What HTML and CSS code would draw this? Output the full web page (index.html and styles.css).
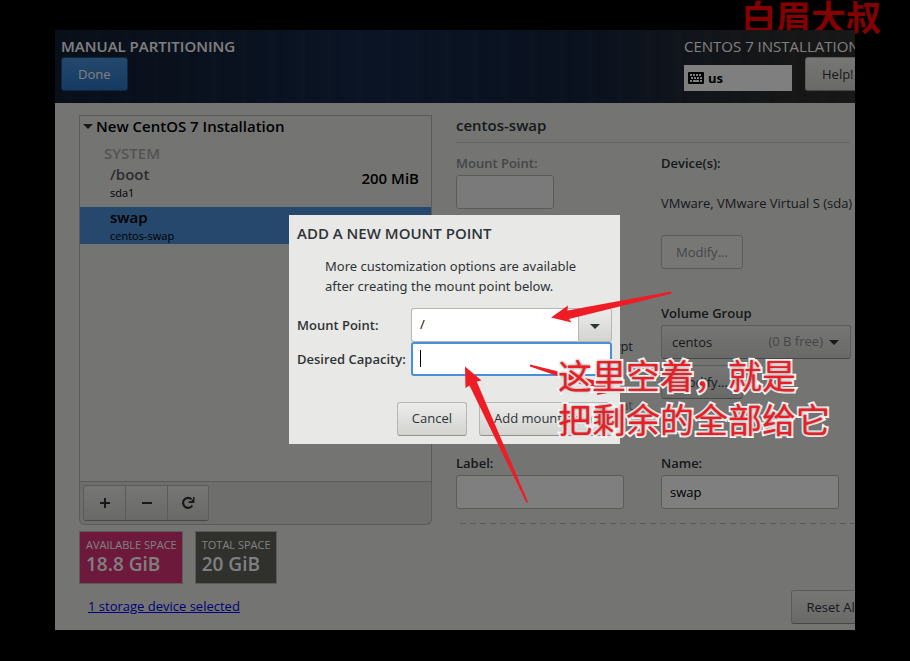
FILE: index.html
```html
<!DOCTYPE html>
<html lang="en">
<head>
  <meta charset="UTF-8">
  <title>Manual Partitioning</title>
  <link rel="stylesheet" href="styles.css">
</head>
<body>
  <div class="watermark" lang="zh-CN">白眉大叔</div>

  <div class="screen">
    <header class="header">
      <div class="header-left">
        <h1 class="header-title">MANUAL PARTITIONING</h1>
        <button class="btn btn-done" type="button">Done</button>
      </div>
      <div class="header-right">
        <div class="product">CENTOS 7 INSTALLATION</div>
        <div class="header-tools">
          <div class="keyboard">
            <svg width="16" height="12" viewBox="0 0 16 12" aria-hidden="true">
              <rect width="16" height="12" rx="1" fill="#000"/>
              <path d="M2 3h2M5 3h2M8 3h2M11 3h2M3 6h2M6 6h2M9 6h2M12 6h2M2 9h2M5 9h6M12 9h2" stroke="#fff" stroke-width="2" fill="none"/>
            </svg>
            <span>us</span>
          </div>
          <button class="btn btn-help" type="button">Help!</button>
        </div>
      </div>
    </header>

    <main class="content">
      <section class="left">
        <div class="tree">
          <div class="tree-head"><span class="caret"></span>New CentOS 7 Installation</div>
          <div class="tree-group">SYSTEM</div>
          <div class="tree-row">
            <div>
              <div class="mount">/boot</div>
              <div class="device">sda1</div>
            </div>
            <div class="size">200 MiB</div>
          </div>
          <div class="tree-row selected">
            <div>
              <div class="mount">swap</div>
              <div class="device">centos-swap</div>
            </div>
          </div>
        </div>
        <div class="toolbar">
          <div class="tool-group">
            <button class="tool" type="button" aria-label="Add">
              <svg width="16" height="16" viewBox="0 0 16 16"><path d="M8 3v10M3 8h10" stroke="#2e3436" stroke-width="2"/></svg>
            </button>
            <button class="tool" type="button" aria-label="Remove">
              <svg width="16" height="16" viewBox="0 0 16 16"><path d="M3 8h10" stroke="#2e3436" stroke-width="2"/></svg>
            </button>
            <button class="tool" type="button" aria-label="Reload">
              <svg width="16" height="16" viewBox="0 0 16 16">
                <path d="M11.500 4.200A5 5 0 1 0 12.300 10.500" stroke="#2e3436" stroke-width="2.200" fill="none"/>
                <path d="M14.500 2v6H8.500V6.300h2.500L13 4V2z" fill="#2e3436"/>
              </svg>
            </button>
          </div>
        </div>
        <div class="stats">
          <div class="stat stat-available">
            <div class="stat-name">AVAILABLE SPACE</div>
            <div class="stat-value">18.8 GiB</div>
          </div>
          <div class="stat stat-total">
            <div class="stat-name">TOTAL SPACE</div>
            <div class="stat-value">20 GiB</div>
          </div>
        </div>
        <a class="storage-link" href="#">1 storage device selected</a>
      </section>

      <section class="right">
        <h2 class="right-title">centos-swap</h2>
        <div class="fields">
          <div class="cell">
            <label class="label disabled" for="mount">Mount Point:</label>
            <input class="input input-short" id="mount" type="text" disabled>
          </div>
          <div class="cell">
            <div class="label">Device(s):</div>
            <div class="devices">VMware, VMware Virtual S (sda)</div>
            <button class="btn btn-modify" type="button" disabled>Modify...</button>
          </div>
          <div class="cell cell-checks">
            <label class="check"><input type="checkbox">Encrypt</label>
            <label class="check disabled"><input type="checkbox" checked disabled>Reformat</label>
          </div>
          <div class="cell">
            <label class="label" for="vg">Volume Group</label>
            <div class="vg">
              <select class="select" id="vg"><option>centos</option></select>
              <span class="vg-free">(0 B free)</span>
              <span class="caret vg-caret"></span>
            </div>
            <button class="btn btn-modify btn-next" type="button">Modify...</button>
          </div>
          <div class="cell">
            <label class="label" for="label">Label:</label>
            <input class="input input-label" id="label" type="text">
          </div>
          <div class="cell">
            <label class="label" for="name">Name:</label>
            <input class="input input-name" id="name" type="text" value="swap">
          </div>
        </div>
        <div class="dashes"></div>
        <button class="btn btn-reset" type="button">Reset All</button>
      </section>
    </main>

    <div class="overlay">
      <form class="dialog">
        <h2 class="dialog-title">ADD A NEW MOUNT POINT</h2>
        <p class="dialog-text">More customization options are available<br>after creating the mount point below.</p>
        <div class="dialog-form">
          <label class="dialog-label" for="new-mount">Mount Point:</label>
          <div class="combo">
            <input class="input" id="new-mount" type="text" value="/">
            <button class="combo-btn" type="button" aria-label="Show mount points"><span class="caret"></span></button>
          </div>
          <label class="dialog-label" for="capacity">Desired Capacity:</label>
          <div class="capacity">
            <input class="input input-focus" id="capacity" type="text">
            <span class="cursor"></span>
          </div>
        </div>
        <div class="dialog-buttons">
          <button class="btn" type="button">Cancel</button>
          <button class="btn" type="button">Add mount point</button>
        </div>
      </form>
    </div>
  </div>

  <!-- arrows and note drawn over the screen -->
  <svg class="arrows" width="910" height="661" viewBox="0 0 910 661" fill="#ee1c25" aria-hidden="true">
    <path d="M551 317.500L568 305.500L567.500 310.500L671 291.500L672 293.500L569 319L571.500 322.500Z"/>
    <path d="M465 366.500L481.500 380.500L476.700 381.500L528 502L526.500 503L469.500 385.500L465.500 388Z"/>
    <path d="M530 364.500L530 366.500L598 390L597 395L618 391L603 377L601 382Z"/>
  </svg>
  <div class="note" lang="zh-CN">这里空着，就是<br>把剩余的全部给它</div>
</body>
</html>
```
FILE: styles.css
```css
* {
  margin: 0;
  padding: 0;
  box-sizing: border-box;
}

body {
  display: flex;
  min-height: 100vh;
  padding: 30px 55px 31px;
  background-color: #000;
  color: #2e3436;
  font-family: 'Open Sans', 'Noto Sans CJK SC', sans-serif;
  font-size: 13px;
  line-height: 20px;
  position: relative;
}

button,
input,
select {
  font: inherit;
  color: inherit;
}

.watermark {
  position: absolute;
  top: 0;
  right: 29px;
  color: #850000;
  font-family: 'Noto Sans CJK SC', sans-serif;
  font-size: 35px;
  font-weight: 700;
  line-height: 32px;
}

.screen {
  position: relative;
  flex: 1;
  min-width: 0;
  display: flex;
  flex-direction: column;
  overflow: hidden;
  background-color: #e8e8e7;
}

/* header */
.header {
  display: grid;
  grid-template-columns: 1fr 171px;
  padding: 6px 0 12px 6px;
  background:
    repeating-linear-gradient(90deg, rgba(255, 255, 255, 0) 0 9px, rgba(255, 255, 255, 0.01) 13px 15px, rgba(0, 0, 0, 0.05) 21px, rgba(255, 255, 255, 0) 29px),
    linear-gradient(90deg, #131f33, #15294a 40%, #14243f 65%, #2e2e2e 92%);
  color: #fff;
  font-size: 15px;
  white-space: nowrap;
}

.header-title {
  margin-bottom: 1px;
  font-size: 15px;
  font-weight: 600;
}

.header-tools {
  display: flex;
  align-items: flex-end;
  gap: 13px;
  margin-top: 1px;
}

.keyboard {
  flex: 0 0 108px;
  height: 26px;
  display: flex;
  align-items: center;
  gap: 4px;
  padding-left: 4px;
  background-color: #fff;
  color: #000;
  font-size: 13px;
  font-weight: bold;
}

/* buttons and inputs */
.btn {
  height: 34px;
  padding: 0 14px 1px;
  border: 1px solid #b6b6b3;
  border-bottom-color: #91918c;
  border-radius: 3px;
  background: linear-gradient(#ececeb, #d3d3d0);
  color: #2e3436;
  font-size: 13px;
  white-space: nowrap;
}

.btn:disabled {
  border-color: #b6b6b3;
  background: #eeeeed;
  color: #8b8e8f;
}

.btn-done,
.btn-help {
  padding: 0 16px 1px;
}

.btn-done {
  border-color: #1c5187;
  background: linear-gradient(#4a90d9, #2a76c6);
  color: #fff;
}

.btn-help {
  flex-shrink: 0;
}

.input,
.select {
  display: block;
  height: 34px;
  width: 100%;
  padding: 0 8px 1px;
  border: 1px solid #b6b6b3;
  border-radius: 3px;
  background-color: #fff;
  color: #000;
  outline: none;
}

.input:disabled {
  background-color: #f4f4f4;
}

.select {
  appearance: none;
  padding: 0 10px 1px;
  border-bottom-color: #91918c;
  background: linear-gradient(#ececeb, #d3d3d0);
  color: #2e3436;
}

.caret {
  display: inline-block;
  border: 5px solid transparent;
  border-top-color: #2e3436;
  border-bottom: 0;
}

/* content */
.content {
  flex: 1;
  display: grid;
  grid-template-columns: 353px 1fr;
  gap: 24px;
  padding: 12px 0 6px 24px;
}

.left {
  display: flex;
  flex-direction: column;
}

.tree {
  height: 367px;
  border: 1px solid #b6b6b3;
  color: #000;
  font-size: 15px;
}

.tree-head {
  display: flex;
  align-items: center;
  gap: 3px;
  height: 20px;
  padding-left: 3px;
  font-weight: 600;
}

.tree-group {
  height: 28px;
  padding: 7px 24px 0;
  color: #a8a8a8;
  font-weight: 600;
}

.tree-row {
  display: flex;
  justify-content: space-between;
  height: 43px;
  padding: 0 12px 0 30px;
}

.mount,
.size {
  font-weight: 600;
}

.mount {
  color: #5a5a5a;
}

.size {
  padding-top: 4px;
}

.device {
  font-size: 11px;
  line-height: 18px;
}

.selected {
  height: 37px;
  background-color: #4a90d9;
}

.selected .mount {
  color: #000;
}

.toolbar {
  height: 43px;
  padding: 3px;
  border: 1px solid #b6b6b3;
  border-top: 0;
  border-radius: 0 0 6px 6px;
  background-color: #dcdcd9;
}

.tool-group {
  display: inline-flex;
  border: 1px solid #b6b6b3;
  border-bottom-color: #91918c;
  border-radius: 3px;
  overflow: hidden;
}

.tool {
  display: flex;
  align-items: center;
  justify-content: center;
  width: 42px;
  height: 34px;
  border: 0;
  border-right: 1px solid #b6b6b3;
  background: linear-gradient(#ececeb, #d3d3d0);
}

.tool:last-child {
  width: 40px;
  border-right: 0;
}

.stats {
  display: flex;
  gap: 12px;
  margin-top: 6px;
}

.stat {
  height: 53px;
  padding: 4px 5px 4px 6px;
  border: 1px solid #b6b6b3;
  color: #fff;
}

.stat-available {
  background-color: #db3279;
}

.stat-total {
  background-color: #60605b;
}

.stat-name {
  font-size: 11px;
  line-height: 18px;
}

.stat-value {
  font-size: 19px;
  font-weight: 600;
}

.storage-link {
  align-self: flex-start;
  margin: 12px 9px 0;
  color: #0000ee;
}

.right {
  display: flex;
  flex-direction: column;
}

.right-title {
  height: 28px;
  margin-right: 5px;
  border-bottom: 1px solid #cfcfcc;
  font-size: 15px;
  font-weight: 600;
}

.fields {
  display: grid;
  grid-template-columns: 205px 1fr;
  grid-template-rows: 150px 150px 58px;
  margin-top: 8px;
}

.label {
  display: block;
  height: 24px;
  padding-top: 2px;
  font-weight: 600;
}

.disabled {
  color: #8b8e8f;
}

.input-short {
  width: 98px;
}

.input-label {
  width: 168px;
}

.input-name {
  width: 178px;
}

.devices {
  padding: 18px 0 22px;
  white-space: nowrap;
}

.cell-checks {
  display: flex;
  flex-direction: column;
  align-items: flex-end;
  gap: 39px;
  padding: 35px 28px 0 0;
}

.check {
  display: flex;
  align-items: center;
  gap: 6px;
}

.vg {
  position: relative;
  width: 190px;
}

.vg-free,
.vg-caret {
  position: absolute;
  pointer-events: none;
}

.vg-free {
  top: 6px;
  right: 28px;
  color: #8b8e8f;
}

.vg-caret {
  top: 15px;
  right: 12px;
}

.btn-next {
  margin-top: 6px;
}

.dashes {
  height: 1px;
  margin-top: 14px;
  background: repeating-linear-gradient(90deg, transparent 0 4px, #b6b6b3 4px 10px);
}

.btn-reset {
  align-self: flex-end;
  margin-top: auto;
  margin-right: -18px;
}

/* dialog */
.overlay {
  position: absolute;
  inset: 0;
  display: flex;
  align-items: center;
  justify-content: center;
  padding: 0 1px 2px 0;
  background-color: rgba(0, 0, 0, 0.5);
}

.dialog {
  width: 331px;
  padding: 8px;
  background-color: #e8e8e6;
}

.dialog-title {
  font-size: 15px;
  font-weight: 600;
}

.dialog-text {
  margin: 13px 0 12px 28px;
  font-family: 'Noto Sans', sans-serif;
  white-space: nowrap;
}

.dialog-form {
  display: grid;
  grid-template-columns: 114px 1fr;
  align-items: center;
}

.dialog-label {
  font-weight: 600;
  white-space: nowrap;
}

.combo {
  display: flex;
}

.combo .input {
  border-right: 0;
  border-radius: 3px 0 0 3px;
}

.combo-btn {
  flex: 0 0 34px;
  border: 1px solid #b6b6b3;
  border-radius: 0 3px 3px 0;
  background: linear-gradient(#ececeb, #d3d3d0);
}

.combo-btn .caret {
  vertical-align: middle;
}

.capacity {
  position: relative;
}

.input-focus {
  border: 2px solid #4a90d9;
}

.cursor {
  position: absolute;
  top: 8px;
  left: 9px;
  width: 1px;
  height: 17px;
  background-color: #000;
}

.dialog-buttons {
  display: flex;
  justify-content: flex-end;
  gap: 12px;
  margin-top: 26px;
}

/* annotations */
.arrows {
  position: absolute;
  top: 0;
  left: 0;
}

.note {
  position: absolute;
  top: 353px;
  left: 558px;
  color: #ee1c25;
  font-family: 'Noto Sans CJK SC', sans-serif;
  font-size: 34px;
  line-height: 44px;
  white-space: nowrap;
  -webkit-text-stroke: 4px #fff;
  paint-order: stroke fill;
  text-shadow: 0 0 3px rgba(0, 0, 0, 0.6);
}
```
